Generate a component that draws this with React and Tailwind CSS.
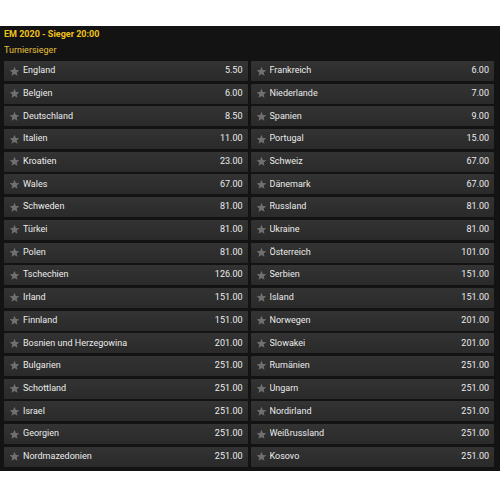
import React from 'react'

const LEFT = [
  ['England', '5.50'],
  ['Belgien', '6.00'],
  ['Deutschland', '8.50'],
  ['Italien', '11.00'],
  ['Kroatien', '23.00'],
  ['Wales', '67.00'],
  ['Schweden', '81.00'],
  ['Türkei', '81.00'],
  ['Polen', '81.00'],
  ['Tschechien', '126.00'],
  ['Irland', '151.00'],
  ['Finnland', '151.00'],
  ['Bosnien und Herzegowina', '201.00'],
  ['Bulgarien', '251.00'],
  ['Schottland', '251.00'],
  ['Israel', '251.00'],
  ['Georgien', '251.00'],
  ['Nordmazedonien', '251.00'],
]

const RIGHT = [
  ['Frankreich', '6.00'],
  ['Niederlande', '7.00'],
  ['Spanien', '9.00'],
  ['Portugal', '15.00'],
  ['Schweiz', '67.00'],
  ['Dänemark', '67.00'],
  ['Russland', '81.00'],
  ['Ukraine', '81.00'],
  ['Österreich', '101.00'],
  ['Serbien', '151.00'],
  ['Island', '151.00'],
  ['Norwegen', '201.00'],
  ['Slowakei', '201.00'],
  ['Rumänien', '251.00'],
  ['Ungarn', '251.00'],
  ['Nordirland', '251.00'],
  ['Weißrussland', '251.00'],
  ['Kosovo', '251.00'],
]

function Star() {
  return (
    <svg viewBox="0 0 24 24" className="w-[11px] h-[11px] shrink-0" fill="#707070">
      <path d="M12 1.5l3 7.1 7.5.6-5.7 4.9 1.8 7.4L12 17.6l-6.6 3.9 1.8-7.4L1.5 9.2 9 8.6z" />
    </svg>
  )
}

function OddRow({ name, odd }) {
  return (
    <div className="h-[20px] flex items-center pl-[5px] pr-[5px] gap-[3px] bg-gradient-to-b from-[#333333] to-[#2a2a2a] rounded-[1px]">
      <Star />
      <span className="flex-1 text-[#ececec] truncate">{name}</span>
      <span className="text-[#ececec]">{odd}</span>
    </div>
  )
}

export default function App() {
  const rows = []
  LEFT.forEach((item, i) => {
    rows.push(<OddRow key={'l' + i} name={item[0]} odd={item[1]} />)
    rows.push(<OddRow key={'r' + i} name={RIGHT[i][0]} odd={RIGHT[i][1]} />)
  })

  return (
    <div className="bg-white w-[500px] h-[500px] pt-[26px]" style={{ fontFamily: 'Roboto, "Liberation Sans", sans-serif' }}>
      <div className="bg-[#131313] h-[445px] pl-[4px] pr-[6px] text-[9px]">
        <div className="h-[17px] flex items-center font-bold text-[#f2c21b]">EM 2020 - Sieger 20:00</div>
        <div className="h-[16px] flex items-center text-[#e8c13a]">Turniersieger</div>
        <div className="grid grid-cols-2 gap-x-[3px] gap-y-[2.7px] mt-[2px]">{rows}</div>
      </div>
    </div>
  )
}
